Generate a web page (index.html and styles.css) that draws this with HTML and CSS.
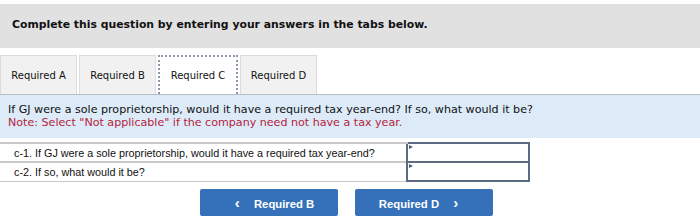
FILE: index.html
```html
<!DOCTYPE html>
<html lang="en">
<head>
    <meta charset="UTF-8">
    <title>Required C</title>
    <link rel="stylesheet" href="styles.css">
</head>
<body>
    <div class="instructions">
        <p>Complete this question by entering your answers in the tabs below.</p>
    </div>

    <div class="tabs">
        <div class="tab">Required A</div>
        <div class="tab">Required B</div>
        <div class="tab active">Required C</div>
        <div class="tab">Required D</div>
    </div>

    <div class="question">
        <p>If GJ were a sole proprietorship, would it have a required tax year-end? If so, what would it be?</p>
        <p class="note">Note: Select "Not applicable" if the company need not have a tax year.</p>
    </div>

    <table class="answers">
        <tr>
            <td class="label">c-1. If GJ were a sole proprietorship, would it have a required tax year-end?</td>
            <td class="input"><span class="arrow"></span></td>
        </tr>
        <tr>
            <td class="label">c-2. If so, what would it be?</td>
            <td class="input"><span class="arrow"></span></td>
        </tr>
    </table>

    <div class="nav">
        <button class="btn"><span class="chev">&lsaquo;</span> Required B</button>
        <button class="btn">Required D <span class="chev">&rsaquo;</span></button>
    </div>
</body>
</html>
```

FILE: styles.css
```css
body {
    margin: 0;
    padding: 0;
    background: #ffffff;
    font-family: 'DejaVu Sans', Verdana, sans-serif;
    color: #111;
}
.instructions {
    margin-top: 4px;
    height: 44px;
    background: #e1e1e1;
    display: flex;
    align-items: center;
}
.instructions p {
    margin: 0 0 4px 12px;
    font-size: 10.85px;
    font-weight: bold;
}
.tabs {
    display: flex;
    margin-top: 7px;
    height: 39px;
    gap: 2px;
}
.tab {
    width: 75px;
    background: #f1f1f1;
    border: 1px solid #dcdcdc;
    border-bottom: none;
    font-size: 10px;
    display: flex;
    align-items: center;
    justify-content: center;
    color: #111;
}
.tab.active {
    width: 76px;
    background: #ffffff;
    border: 2px dotted #8a96aa;
    border-bottom: none;
}
.question {
    background: #ddebf8;
    border-top: 1px solid #b9bec6;
    padding: 8px 8px 9px;
    font-size: 11.1px;
    line-height: 13px;
}
.question p {
    margin: 0;
}
.question .note {
    color: #b4233c;
}
.answers {
    margin-top: 4px;
    border-collapse: collapse;
    font-family: 'Liberation Sans', Arial, sans-serif;
    font-size: 10.8px;
}
.answers td {
    height: 17px;
    padding: 0;
}
.answers .label {
    width: 392px;
    padding-left: 14px;
    border-top: 2px solid #c8c8c8;
    border-bottom: 1px solid #c8c8c8;
}
.answers .input {
    width: 120px;
    border: 2px solid #5c6b82;
    position: relative;
}
.arrow {
    position: absolute;
    left: 1px;
    top: 1px;
    width: 0;
    height: 0;
    border-top: 2.5px solid transparent;
    border-bottom: 2.5px solid transparent;
    border-left: 4px solid #4a5c7a;
}
.nav {
    display: flex;
    gap: 17px;
    margin: 7px 0 0 200px;
}
.btn {
    width: 138px;
    height: 27px;
    background: #3471b9;
    border: none;
    border-radius: 2px;
    color: #ffffff;
    font-family: 'Liberation Sans', Arial, sans-serif;
    font-weight: bold;
    font-size: 11.3px;
}
.chev {
    font-size: 15px;
    margin: 0 11px;
}
```
